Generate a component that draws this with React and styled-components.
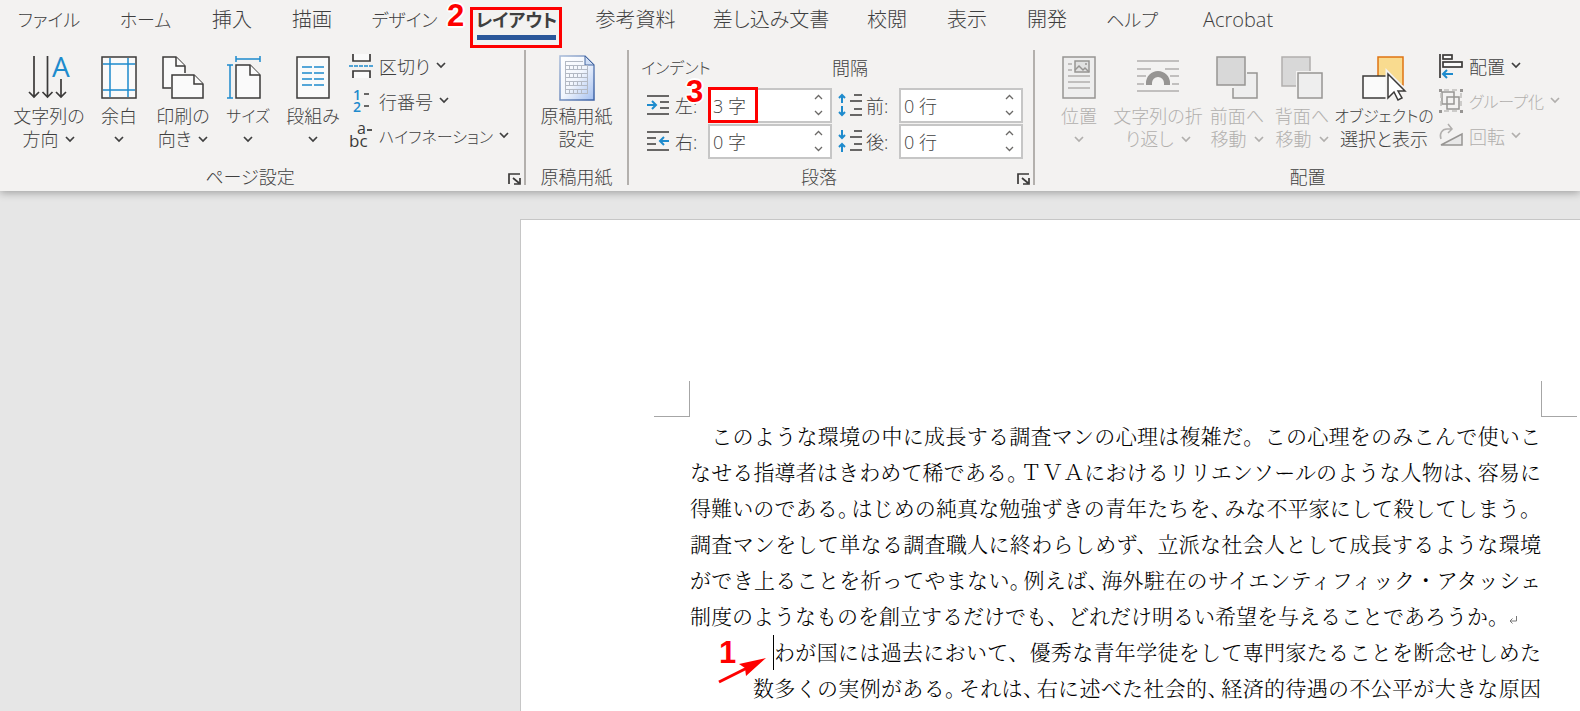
import React, { useState } from 'react';
import styled, { createGlobalStyle } from 'styled-components';

const GlobalStyle = createGlobalStyle`
  * {
    box-sizing: border-box;
  }

  body {
    margin: 0;
    background: #e6e6e6;
    color: #3f3f3f;
    font-family: "Open Sans", "Noto Sans CJK JP", sans-serif;
    font-size: 18px;
    font-weight: 300;
  }

  button, input {
    font: inherit;
    color: inherit;
  }

  svg {
    overflow: visible;
  }
`;

const Window = styled.div`
  min-height: 100vh;
  overflow: hidden;
`;

const Ribbon = styled.header`
  background: #f3f2f1;
  height: 191px;
  font-feature-settings: "palt";
  box-shadow: 0 2px 8px rgba(0, 0, 0, 0.3);
`;

const TabBar = styled.nav`
  display: flex;
  gap: 40px;
  height: 50px;
  padding-left: 19px;
`;

const Tab = styled.button`
  position: relative;
  display: flex;
  justify-content: center;
  width: ${(props) => props.$width}px;
  height: 40px;
  padding: 0;
  border: 0;
  background: none;
  font-size: ${(props) => (props.$kana ? 18 : 20)}px;
  font-weight: ${(props) => (props.$active ? 700 : 300)};
  line-height: 40px;
  white-space: nowrap;
`;

const TabUnderline = styled.span`
  position: absolute;
  left: 0;
  right: 0;
  bottom: 0;
  height: 5px;
  background: #2b579a;
`;

const RedBox = styled.span`
  position: absolute;
  top: ${(props) => props.$top}px;
  left: ${(props) => props.$left}px;
  width: ${(props) => props.$width}px;
  height: ${(props) => props.$height}px;
  border: 3px solid #fe0000;
  pointer-events: none;
`;

const StepNumber = styled.span`
  position: absolute;
  top: ${(props) => props.$top}px;
  left: ${(props) => props.$left}px;
  color: #fe0000;
  font-family: "Liberation Sans", sans-serif;
  font-size: 31px;
  font-weight: 700;
  line-height: 32px;
  text-shadow: -2px 0 #fff, 2px 0 #fff, 0 -2px #fff, 0 2px #fff, -1px -1px #fff, 1px 1px #fff, 1px -1px #fff, -1px 1px #fff;
  pointer-events: none;
`;

const Groups = styled.div`
  display: flex;
`;

const GroupBox = styled.section`
  display: flex;
  flex-direction: column;
  flex: ${(props) => (props.$width ? `0 0 ${props.$width}px` : '1 0 auto')};
  height: 135px;
  border-right: ${(props) => (props.$width ? '2px solid #b3b0ad' : 'none')};
`;

const GroupBody = styled.div`
  display: flex;
  flex: 1;
  padding-left: ${(props) => props.$pad}px;
`;

const GroupFooter = styled.div`
  position: relative;
  height: 15px;
  padding-right: ${(props) => (props.$launcher ? 24 : 0)}px;
  line-height: 14px;
  text-align: center;
`;

const Launcher = styled.button`
  position: absolute;
  right: 3px;
  top: 3px;
  display: flex;
  padding: 0;
  border: 0;
  background: none;
`;

const LargeButton = styled.button`
  display: flex;
  flex-direction: column;
  align-items: center;
  gap: 6px;
  width: ${(props) => props.$width}px;
  padding: 5px 0 0;
  border: 0;
  background: none;
  color: ${(props) => (props.disabled ? '#b1afad' : '#3f3f3f')};
  line-height: 23px;
  white-space: nowrap;
`;

const LargeIcon = styled.span`
  display: flex;
  justify-content: center;
  height: 44px;
`;

const LabelLine = styled.span`
  display: flex;
  align-items: center;
  justify-content: center;
  gap: 7px;
  height: 23px;
  font-size: ${(props) => (props.$kana ? 16 : 18)}px;
`;

const SmallButtons = styled.div`
  display: flex;
  flex-direction: column;
  align-items: flex-start;
  margin: -2px 0 0 ${(props) => props.$left}px;
`;

const SmallButton = styled.button`
  display: flex;
  align-items: center;
  gap: 6px;
  height: 35px;
  padding: 0;
  border: 0;
  background: none;
  color: ${(props) => (props.disabled ? '#b1afad' : '#3f3f3f')};
  font-size: ${(props) => (props.$kana ? 16 : 18)}px;
  white-space: nowrap;
`;

const FieldColumn = styled.div`
  width: 191px;
`;

const FieldHeading = styled.div`
  height: 37px;
  font-size: ${(props) => (props.$kana ? 16 : 18)}px;
  line-height: 36px;
`;

const FieldRow = styled.div`
  display: grid;
  grid-template-columns: 28px 33px 124px;
  align-items: center;
  height: 36px;
  padding-left: 6px;
`;

const SpinBox = styled.div`
  position: relative;
  display: flex;
  height: 35px;
  border: 2px solid #c6c6c6;
  background: #fff;
`;

const SpinInput = styled.input`
  flex: 1;
  min-width: 0;
  padding: 0 0 0 3px;
  border: 0;
  outline: 0;
  background: none;
`;

const SpinArrows = styled.div`
  display: flex;
  flex-direction: column;
  width: 24px;
`;

const SpinArrow = styled.button`
  display: flex;
  align-items: center;
  justify-content: center;
  flex: 1;
  padding: 0;
  border: 0;
  background: none;
`;

const Page = styled.main`
  display: grid;
  grid-template-columns: 36px 1fr 36px;
  grid-template-rows: 36px auto;
  min-height: 493px;
  margin: 28px 0 0 520px;
  padding: 161px 3px 0 133px;
  border-top: 1px solid #c6c6c6;
  border-left: 1px solid #c6c6c6;
  background: #fff;
`;

const Corner = styled.div`
  grid-column: ${(props) => (props.$right ? 3 : 1)};
  border-bottom: 1px solid #a6a6a6;
  border-left: ${(props) => (props.$right ? '1px solid #a6a6a6' : 'none')};
  border-right: ${(props) => (props.$right ? 'none' : '1px solid #a6a6a6')};
`;

const TextArea = styled.article`
  grid-column: 2;
  color: #000;
  font-family: "Noto Serif CJK JP", "Noto Sans CJK JP", serif;
  font-size: 21px;
  line-height: 36px;
`;

const TextLine = styled.div`
  position: relative;
  height: 36px;
  margin-left: ${(props) => props.$indent || 0}px;
  text-align: left;
  text-align-last: ${(props) => (props.$last ? 'left' : 'justify')};
  white-space: nowrap;
`;

const TightMark = styled.span`
  padding-right: 3px;
  font-feature-settings: "halt";
`;

const Caret = styled.span`
  position: absolute;
  top: 2px;
  left: -1px;
  width: 1px;
  height: 35px;
  background: #000;
`;

const ArrowMark = styled.svg`
  position: absolute;
  top: 23px;
  left: -57px;
`;

const dark = '#3b3a39';
const blue = '#1e8bcd';
const grey = '#979593';

const Chevron = () => (
  <svg width="10" height="7" viewBox="0 0 10 7" fill="none" stroke="currentColor" strokeWidth="1.700">
    <path d="M1 1l4 4 4-4" />
  </svg>
);

const SpinChevron = ({ up }) => (
  <svg width="9" height="6" viewBox="0 0 9 6" fill="none" stroke="#6b6967" strokeWidth="1.300">
    <path d={up ? 'M1 5l3.500-3.500L8 5' : 'M1 1l3.500 3.500L8 1'} />
  </svg>
);

const TextDirectionIcon = () => (
  <svg width="42" height="44" viewBox="0 0 42 44" fill="none" stroke={dark} strokeWidth="1.700">
    <path d="M6 1v41M1 37l5 5 5-5M19.500 1v41M14.500 37l5 5 5-5M33 24v18M28 37l5 5 5-5" />
    <text x="24" y="22" fill={blue} stroke="none" fontFamily="Open Sans" fontSize="28" fontWeight="400">A</text>
  </svg>
);

const MarginsIcon = () => (
  <svg width="36" height="44" viewBox="0 0 36 44" fill="#fafafa" stroke={dark} strokeWidth="1.500">
    <rect x="1" y="2" width="34" height="41" />
    <path d="M9 3v39M27 3v39M2 9h32M2 35h32" stroke={blue} />
  </svg>
);

const OrientationIcon = () => (
  <svg width="42" height="44" viewBox="0 0 42 44" fill="#fafafa" stroke={dark} strokeWidth="1.500">
    <path d="M9 33H1V2h13l9 9v7" />
    <path d="M14 2v9h9" />
    <path d="M10 20h22l9 9v14H10z" />
    <path d="M32 20v9h9" />
  </svg>
);

const SizeIcon = () => (
  <svg width="42" height="44" viewBox="0 0 42 44" fill="#fafafa" stroke={dark} strokeWidth="1.500">
    <path d="M9 10h14l10 10v23H9z" />
    <path d="M23 10v10h10" />
    <path d="M9 4h24M9 1v6M33 1v6M3 10v33M0 10h6M0 43h6" stroke={blue} />
  </svg>
);

const ColumnsIcon = () => (
  <svg width="34" height="44" viewBox="0 0 34 44" fill="#fafafa" stroke={dark} strokeWidth="1.500">
    <rect x="1" y="2" width="32" height="41" />
    <path d="M6 12h10M18 12h10M6 18h10M18 18h10M6 24h10M18 24h10M6 30h10M18 30h10" stroke={blue} />
  </svg>
);

const BreaksIcon = () => (
  <svg width="24" height="26" viewBox="0 0 24 26" fill="#fafafa" stroke={dark} strokeWidth="1.700">
    <path d="M4 1v7h17V1M4 25v-7h17v7" />
    <path d="M0 13h24" stroke={blue} strokeDasharray="4 1" />
  </svg>
);

const LineNumbersIcon = () => (
  <svg width="24" height="26" viewBox="0 0 24 26" fill="none" stroke={dark} strokeWidth="1.700">
    <text x="4" y="12" fill={blue} stroke="none" fontFamily="Open Sans" fontSize="14" fontWeight="600">1</text>
    <text x="4" y="24" fill={blue} stroke="none" fontFamily="Open Sans" fontSize="14" fontWeight="600">2</text>
    <path d="M15 6h5M15 18h5" />
  </svg>
);

const HyphenationIcon = () => (
  <svg width="24" height="26" viewBox="0 0 24 26" fill="none" stroke={dark} strokeWidth="1.700">
    <text x="0" y="24" fill={dark} stroke="none" fontFamily="Open Sans" fontSize="17" fontWeight="400">bc</text>
    <text x="8" y="11" fill={dark} stroke="none" fontFamily="Open Sans" fontSize="16" fontWeight="400">a</text>
    <path d="M18 7h5" />
  </svg>
);

const ManuscriptIcon = () => (
  <svg width="36" height="46" viewBox="0 0 36 46">
    <defs>
      <linearGradient id="sheet" x1="0" y1="0" x2="1" y2="1">
        <stop offset="0" stopColor="#fff" />
        <stop offset="0.500" stopColor="#f2f6fd" />
        <stop offset="1" stopColor="#a3bff0" />
      </linearGradient>
      <linearGradient id="sheetEdge" x1="0" y1="0" x2="1" y2="1">
        <stop offset="0" stopColor="#a9bcd9" />
        <stop offset="1" stopColor="#3d62a5" />
      </linearGradient>
    </defs>
    <path d="M1 1h25l9 9v35H1z" fill="url(#sheet)" stroke="url(#sheetEdge)" strokeWidth="1.500" />
    <path d="M26 1v9h9z" fill="#cfdef6" stroke="#45669f" />
    <path
      d="M6 6.500h18M6 10.500h23M6 14.500h23M6 18.500h23M6 22.500h23M6 26.500h23M6 30.500h23M6 34.500h23M6 38.500h23M6.500 6v33M28.500 10v29"
      fill="none"
      stroke="#b3b9c4"
    />
    <path
      d="M10.500 11v3M14.500 11v3M18.500 11v3M22.500 11v3M10.500 19v3M14.500 19v3M18.500 19v3M22.500 19v3M10.500 27v3M14.500 27v3M18.500 27v3M22.500 27v3M10.500 35v3M14.500 35v3M18.500 35v3M22.500 35v3"
      stroke="#b3b9c4"
    />
  </svg>
);

const IndentIcon = ({ right }) => (
  <svg width="22" height="20" viewBox="0 0 22 20" fill="none" stroke={dark} strokeWidth="1.700">
    {right ? (
      <>
        <path d="M0 1h22M0 7h9M0 13h9M0 19h22" />
        <path d="M22 10h-9M17 6l-4 4 4 4" stroke={blue} strokeWidth="2" />
      </>
    ) : (
      <>
        <path d="M0 1h22M13 7h9M13 13h9M0 19h22" />
        <path d="M0 10h9M5 6l4 4-4 4" stroke={blue} strokeWidth="2" />
      </>
    )}
  </svg>
);

const SpacingIcon = ({ after }) => (
  <svg width="25" height="24" viewBox="0 0 25 24" fill="none" stroke={dark} strokeWidth="1.700">
    <path d={after ? 'M16 2h8M12 8h12M16 15h8M12 21h12' : 'M16 2h8M12 8h12M16 16h8M12 22h12'} />
    <path
      d={after ? 'M4 1v8M1 6l3 3 3-3M4 23v-8M1 18l3-3 3 3' : 'M4 10V2M1 5l3-3 3 3M4 13v9M1 19l3 3 3-3'}
      stroke={blue}
      strokeWidth="2"
    />
  </svg>
);

const PositionIcon = () => (
  <svg width="34" height="44" viewBox="0 0 34 44" fill="#eee" stroke={grey} strokeWidth="1.500">
    <rect x="1" y="2" width="32" height="41" />
    <rect x="13" y="6" width="14" height="11" fill="#e1e1e1" />
    <path d="M13 15l4-4 4 4 2-2 4 4" fill="none" />
    <path d="M6 9h4M6 15h4M6 21h22M6 27h22M6 33h22" stroke="#b1afad" />
    <circle cx="24" cy="9" r="1" fill={grey} stroke="none" />
  </svg>
);

const WrapIcon = () => (
  <svg width="42" height="44" viewBox="0 0 42 44" fill="none" stroke="#b1afad" strokeWidth="1.700">
    <path d="M0 6h42M0 14h14M28 14h14M0 21h9M33 21h9M0 29h7M35 29h7M0 36h42" />
    <path d="M12 30v-2a9 9 0 0 1 18 0v2" stroke={grey} strokeWidth="6" />
  </svg>
);

const ForwardIcon = () => (
  <svg width="42" height="44" viewBox="0 0 42 44" fill="#eee" stroke={grey} strokeWidth="1.500">
    <path d="M17 33v10h24V18H31" />
    <rect x="1" y="2" width="28" height="28" fill="#d8d8d8" />
  </svg>
);

const BackwardIcon = () => (
  <svg width="42" height="44" viewBox="0 0 42 44" fill="#eee" stroke={grey} strokeWidth="1.500">
    <path d="M15 31H1V2h28v14H15z" fill="#d8d8d8" stroke="none" />
    <path d="M15 31H1V2h28v14" fill="none" stroke="#b1afad" />
    <rect x="17" y="18" width="24" height="25" />
  </svg>
);

const SelectionIcon = () => (
  <svg width="44" height="46" viewBox="0 0 44 46" stroke={dark} strokeWidth="1.500">
    <rect x="16" y="2" width="25" height="28" fill="#f9db8f" stroke="#df7412" />
    <rect x="1" y="21" width="25" height="22" fill="#fafafa" />
    <path d="M26 19v24l6-6 4 8 4-2-4-7h7z" fill="#fff" stroke="#f3f2f1" strokeWidth="5" />
    <path d="M26 19v24l6-6 4 8 4-2-4-7h7z" fill="#fff" />
  </svg>
);

const AlignIcon = () => (
  <svg width="24" height="26" viewBox="0 0 24 26" fill="#fafafa" stroke={dark} strokeWidth="1.700">
    <path d="M1 1v24" />
    <rect x="4" y="2" width="9" height="4" />
    <rect x="4" y="9" width="19" height="5" />
    <path d="M14 21H4M8 17l-4 4 4 4" fill="none" stroke={blue} strokeWidth="2" />
  </svg>
);

const GroupIcon = () => (
  <svg width="24" height="26" viewBox="0 0 24 26" fill="none" stroke={grey} strokeWidth="1.500">
    <rect x="3" y="4" width="12" height="12" />
    <rect x="8" y="9" width="12" height="12" />
    <path d="M5 2h14M5 23h14M2 5v15M22 5v15" stroke="#c0bebc" strokeDasharray="5 3" />
    <path d="M0 1h3v3H0zM21 1h3v3h-3zM0 22h3v3H0zM21 22h3v3h-3z" fill={grey} stroke="none" />
  </svg>
);

const RotateIcon = () => (
  <svg width="24" height="26" viewBox="0 0 24 26" fill="#e8e8e8" stroke={grey} strokeWidth="1.500">
    <path d="M2 22h21V11z" />
    <path d="M2 16C0 11 3 6 8 6h5M9 1l4 5-4 4" fill="none" stroke="#b1afad" />
  </svg>
);

const LauncherIcon = () => (
  <svg width="13" height="12" viewBox="0 0 13 12" fill="none" stroke={dark} strokeWidth="1.700">
    <path d="M1 11V1h11M5 5l6 5M12 5v6H6" />
  </svg>
);

const tabs = [
  { name: 'ファイル', width: 60 },
  { name: 'ホーム', width: 53 },
  { name: '挿入', width: 40 },
  { name: '描画', width: 40 },
  { name: 'デザイン', width: 65 },
  { name: 'レイアウト', width: 79 },
  { name: '参考資料', width: 79 },
  { name: '差し込み文書', width: 112 },
  { name: '校閲', width: 40 },
  { name: '表示', width: 40 },
  { name: '開発', width: 40 },
  { name: 'ヘルプ', width: 50 },
  { name: 'Acrobat', width: 82 },
];

const paragraphs = [
  { text: '　このような環境の中に成長する調査マンの心理は複雑だ。この心理をのみこんで使いこ' },
  { text: 'なせる指導者はきわめて稀である。ＴＶＡにおけるリリエンソールのような人物は、容易に', tight: true },
  { text: '得難いのである。はじめの純真な勉強ずきの青年たちを、みな不平家にして殺してしまう。', tight: true },
  { text: '調査マンをして単なる調査職人に終わらしめず、立派な社会人として成長するような環境' },
  { text: 'ができ上ることを祈ってやまない。例えば、海外駐在のサイエンティフィック・アタッシェ', tight: true },
  { text: '制度のようなものを創立するだけでも、どれだけ明るい希望を与えることであろうか。', last: true },
  { text: 'わが国には過去において、優秀な青年学徒をして専門家たることを断念せしめた', indent: 84, cursor: true },
  { text: '数多くの実例がある。それは、右に述べた社会的、経済的待遇の不公平が大きな原因', indent: 63, tight: true },
];

// mostly-kana labels are set a little smaller than kanji ones
const isKana = (text) => /^[ァ-ヶー]{2}/.test(text) && !text.startsWith('ページ');

const Group = ({ title, width, pad, launcher, children }) => (
  <GroupBox $width={width}>
    <GroupBody $pad={pad}>{children}</GroupBody>
    <GroupFooter $launcher={launcher}>
      {title}
      {launcher && (
        <Launcher aria-label={title}>
          <LauncherIcon />
        </Launcher>
      )}
    </GroupFooter>
  </GroupBox>
);

const Large = ({ icon, width, lines, menu = true, disabled }) => (
  <LargeButton $width={width} disabled={disabled}>
    <LargeIcon>{icon}</LargeIcon>
    <span>
      <LabelLine $kana={isKana(lines[0])}>{lines[0]}</LabelLine>
      <LabelLine>
        {lines[1]}
        {menu && <Chevron />}
      </LabelLine>
    </span>
  </LargeButton>
);

const Small = ({ icon, label, disabled }) => (
  <SmallButton disabled={disabled} $kana={isKana(label)}>
    {icon}
    {label}
    <Chevron />
  </SmallButton>
);

const SpinField = ({ id, icon, label, unit, start, children }) => {
  const [value, setValue] = useState(`${start} ${unit}`);
  const step = (amount) => {
    const next = Math.max(0, (parseInt(value, 10) || 0) + amount);
    setValue(`${next} ${unit}`);
  };
  return (
    <FieldRow>
      {icon}
      <label htmlFor={id}>{label}</label>
      <SpinBox>
        <SpinInput id={id} value={value} onChange={(e) => setValue(e.target.value)} />
        <SpinArrows>
          <SpinArrow aria-label="+" onClick={() => step(1)}>
            <SpinChevron up />
          </SpinArrow>
          <SpinArrow aria-label="-" onClick={() => step(-1)}>
            <SpinChevron />
          </SpinArrow>
        </SpinArrows>
        {children}
      </SpinBox>
    </FieldRow>
  );
};

const tighten = (text) =>
  text.split(/([、。])(?=.)/).map((part, i) => (i % 2 ? <TightMark key={i}>{part}</TightMark> : part));

const App = () => {
  const [active, setActive] = useState('レイアウト');
  return (
    <Window>
      <GlobalStyle />
      <Ribbon>
        <TabBar>
          {tabs.map((tab) => (
            <Tab
              key={tab.name}
              $width={tab.width}
              $kana={isKana(tab.name)}
              $active={tab.name === active}
              onClick={() => setActive(tab.name)}
            >
              {tab.name}
              {tab.name === active && <TabUnderline />}
              {tab.name === 'レイアウト' && (
                <>
                  <RedBox $top={7} $left={-7} $width={92} $height={41} />
                  <StepNumber $top={0} $left={-30}>2</StepNumber>
                </>
              )}
            </Tab>
          ))}
        </TabBar>
        <Groups>
          <Group title="ページ設定" width={526} pad={8} launcher>
            <Large width={82} icon={<TextDirectionIcon />} lines={['文字列の', '方向']} />
            <Large width={58} icon={<MarginsIcon />} lines={['余白', '']} />
            <Large width={70} icon={<OrientationIcon />} lines={['印刷の', '向き']} />
            <Large width={60} icon={<SizeIcon />} lines={['サイズ', '']} />
            <Large width={70} icon={<ColumnsIcon />} lines={['段組み', '']} />
            <SmallButtons $left={1}>
              <Small icon={<BreaksIcon />} label="区切り" />
              <Small icon={<LineNumbersIcon />} label="行番号" />
              <Small icon={<HyphenationIcon />} label="ハイフネーション" />
            </SmallButtons>
          </Group>
          <Group title="原稿用紙" width={103} pad={0}>
            <Large width={101} icon={<ManuscriptIcon />} lines={['原稿用紙', '設定']} menu={false} />
          </Group>
          <Group title="段落" width={406} pad={12} launcher>
            <FieldColumn>
              <FieldHeading $kana>インデント</FieldHeading>
              <SpinField id="left" icon={<IndentIcon />} label="左:" unit="字" start={3}>
                <RedBox $top={-3} $left={-2} $width={50} $height={36} />
                <StepNumber $top={-14} $left={-24}>3</StepNumber>
              </SpinField>
              <SpinField id="right" icon={<IndentIcon right />} label="右:" unit="字" start={0} />
            </FieldColumn>
            <FieldColumn>
              <FieldHeading>間隔</FieldHeading>
              <SpinField id="before" icon={<SpacingIcon />} label="前:" unit="行" start={0} />
              <SpinField id="after" icon={<SpacingIcon after />} label="後:" unit="行" start={0} />
            </FieldColumn>
          </Group>
          <Group title="配置" pad={11}>
            <Large width={66} icon={<PositionIcon />} lines={['位置', '']} disabled />
            <Large width={92} icon={<WrapIcon />} lines={['文字列の折', 'り返し']} disabled />
            <Large width={66} icon={<ForwardIcon />} lines={['前面へ', '移動']} disabled />
            <Large width={64} icon={<BackwardIcon />} lines={['背面へ', '移動']} disabled />
            <Large width={100} icon={<SelectionIcon />} lines={['オブジェクトの', '選択と表示']} menu={false} />
            <SmallButtons $left={5}>
              <Small icon={<AlignIcon />} label="配置" />
              <Small icon={<GroupIcon />} label="グループ化" disabled />
              <Small icon={<RotateIcon />} label="回転" disabled />
            </SmallButtons>
          </Group>
        </Groups>
      </Ribbon>
      <Page>
        <Corner />
        <Corner $right />
        <TextArea>
          {paragraphs.map((line) => (
            <TextLine key={line.text} $indent={line.indent} $last={line.last}>
              {line.tight ? tighten(line.text) : line.text}
              {line.last && (
                <svg width="8" height="9" viewBox="0 0 8 9" fill="none" stroke="#777">
                  <path d="M7.500 1v5H1M3.500 3.500L1 6l2.500 2.500" />
                </svg>
              )}
              {line.cursor && (
                <>
                  <Caret />
                  <StepNumber $top={4} $left={-55}>1</StepNumber>
                  <ArrowMark width="50" height="28" viewBox="0 0 50 28">
                    <path d="M2 26L30 12" stroke="#fe0000" strokeWidth="3" />
                    <path d="M49 2L22 8l6 4 1 8z" fill="#fe0000" />
                  </ArrowMark>
                </>
              )}
            </TextLine>
          ))}
        </TextArea>
      </Page>
    </Window>
  );
};

export default App;
